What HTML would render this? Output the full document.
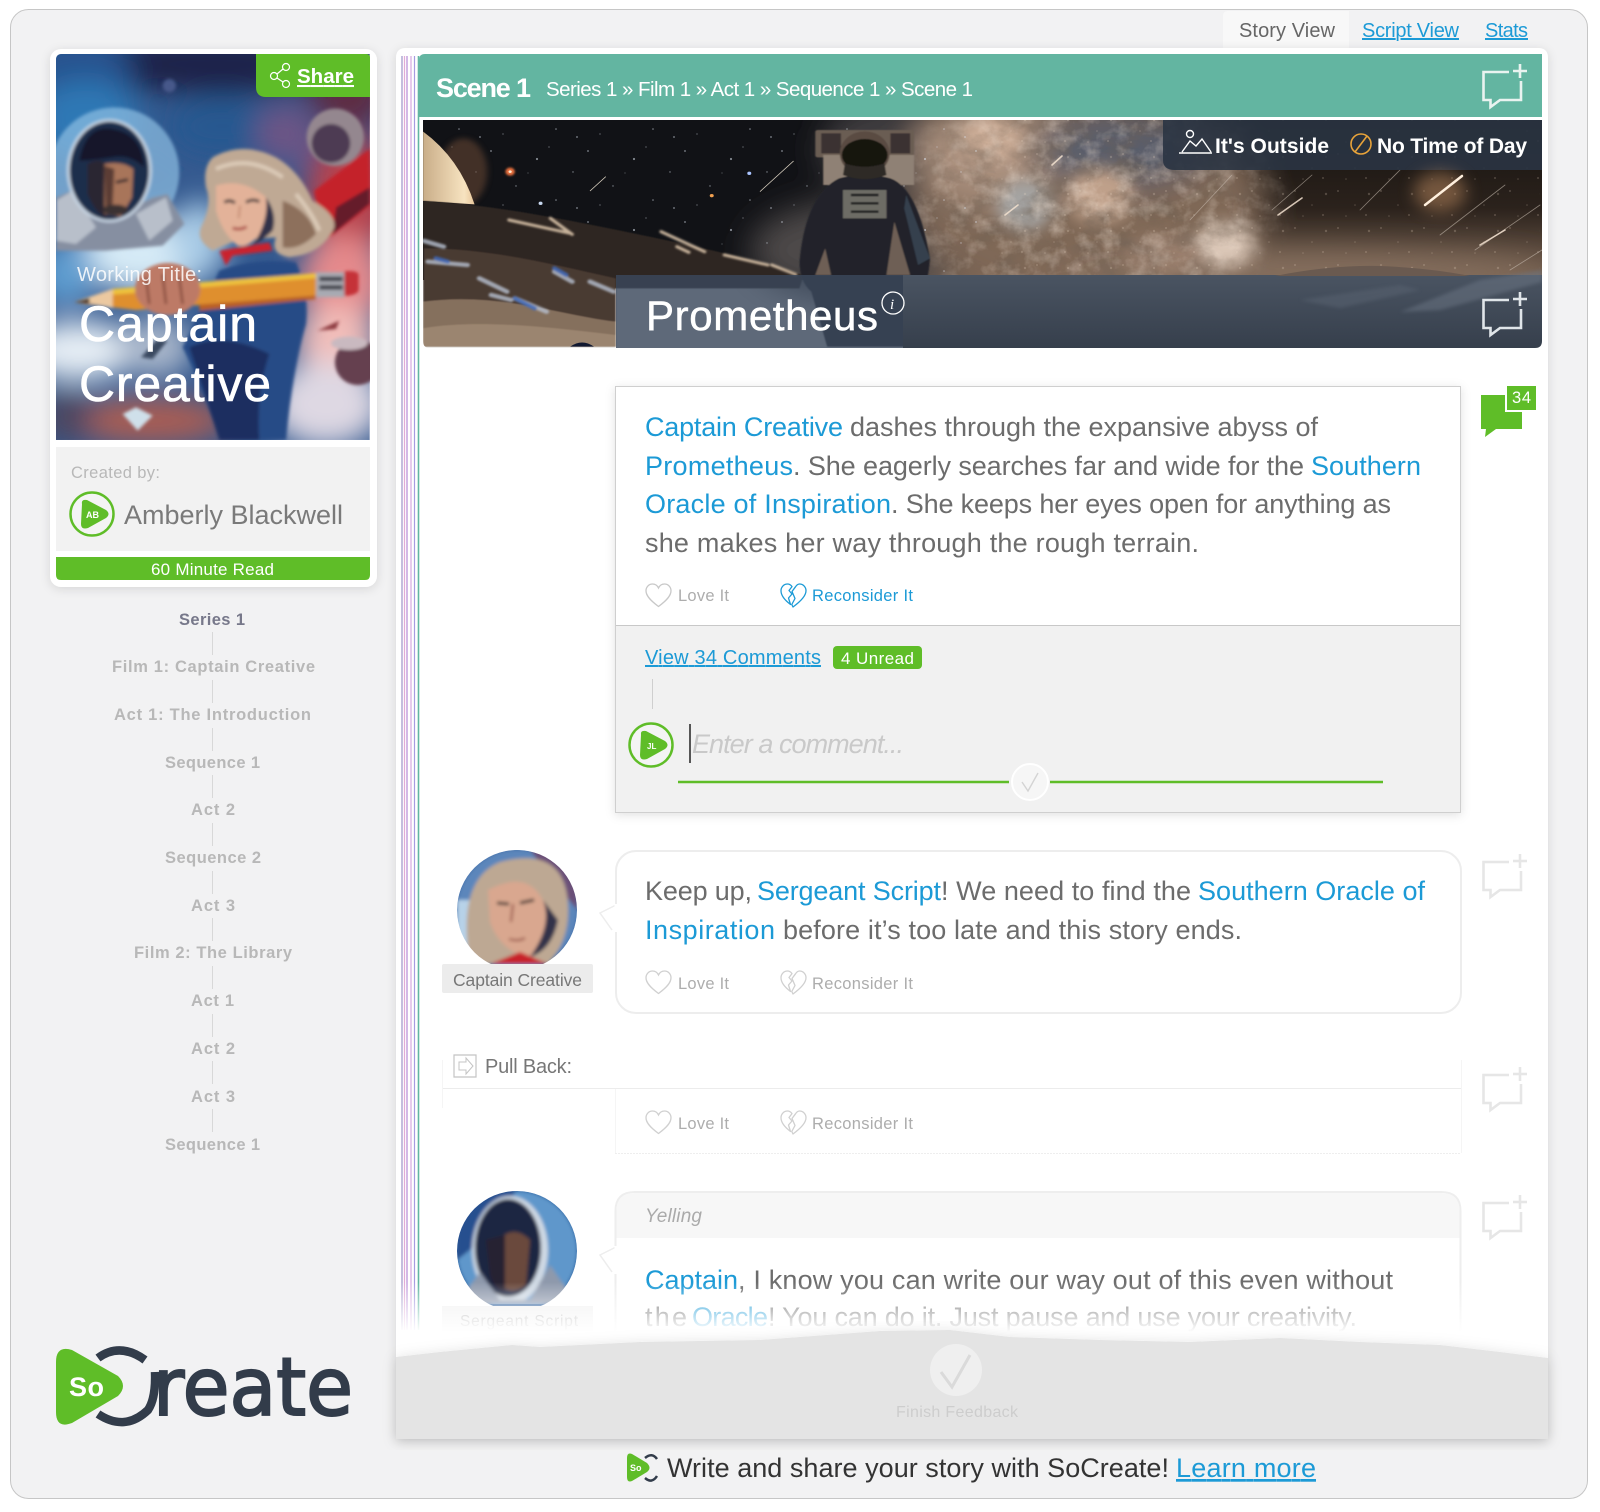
<!DOCTYPE html>
<html lang="en"><head><meta charset="utf-8"><title>Captain Creative - Story View</title>
<style>
html,body{margin:0;padding:0;background:#fff}
svg{display:block}
text{font-family:"Liberation Sans",sans-serif}
.b{font-size:27px;fill:#6c6c6c}
.l{font-size:27px;fill:#1c9ad6}
.act{font-size:16.5px;fill:#adadad}
.tr{font-size:16.5px;font-weight:700;fill:#b8b8b8;text-anchor:start}
.w{fill:#fff}
</style></head><body>
<svg width="1600" height="1512" viewBox="0 0 1600 1512" xmlns="http://www.w3.org/2000/svg">
<defs>
<filter id="b3" x="-30%" y="-30%" width="160%" height="160%"><feGaussianBlur stdDeviation="3"/></filter>
<filter id="b6" x="-30%" y="-30%" width="160%" height="160%"><feGaussianBlur stdDeviation="5"/></filter>
<filter id="b40" x="-60%" y="-60%" width="220%" height="220%"><feGaussianBlur stdDeviation="42"/></filter>
<filter id="b1" x="-20%" y="-20%" width="140%" height="140%"><feGaussianBlur stdDeviation="1"/></filter>
<filter id="b2" x="-20%" y="-20%" width="140%" height="140%"><feGaussianBlur stdDeviation="1.800"/></filter>
<filter id="b8" x="-40%" y="-40%" width="180%" height="180%"><feGaussianBlur stdDeviation="8"/></filter>
<filter id="b14" x="-50%" y="-50%" width="200%" height="200%"><feGaussianBlur stdDeviation="16"/></filter>
<filter id="sh" x="-5%" y="-5%" width="110%" height="110%"><feDropShadow dx="0" dy="2" stdDeviation="5" flood-color="#000" flood-opacity=".12"/></filter>
<filter id="sh2" x="-3%" y="-8%" width="106%" height="118%"><feDropShadow dx="0" dy="2" stdDeviation="7" flood-color="#000" flood-opacity=".13"/></filter>
<filter id="noise" x="0" y="0" width="100%" height="100%"><feTurbulence type="fractalNoise" baseFrequency=".035 .05" numOctaves="5" seed="7"/><feColorMatrix values="0 0 0 0 .16  0 0 0 0 .12  0 0 0 0 .09  1.9 0 0 0 -.72"/></filter>
<filter id="noise2" x="0" y="0" width="100%" height="100%"><feTurbulence type="fractalNoise" baseFrequency=".06" numOctaves="4" seed="3"/><feColorMatrix values="0 0 0 0 .94  0 0 0 0 .82  0 0 0 0 .72  0 2.2 0 0 -.95"/></filter>
<radialGradient id="mwg"><stop offset="0" stop-color="#fff"/><stop offset=".75" stop-color="#fff" stop-opacity=".7"/><stop offset="1" stop-color="#fff" stop-opacity="0"/></radialGradient>
<mask id="mw"><ellipse cx="1090" cy="200" rx="210" ry="130" fill="url(#mwg)"/></mask>
<clipPath id="cCover"><path d="M62 54H370V440H56V60Q56 54 62 54Z"/></clipPath>
<clipPath id="cBanner"><path d="M423 120H1542V341Q1542 348 1535 348H430Q423 348 423 341Z"/></clipPath>
<clipPath id="cA1"><path d="M457 850H577V964H457Z"/></clipPath>
<clipPath id="cA2"><path d="M457 1190H577V1304H457Z"/></clipPath>
<pattern id="stars" width="97" height="71" patternUnits="userSpaceOnUse">
<g fill="#dfe6f2"><circle cx="6" cy="9" r=".9"/><circle cx="31" cy="44" r=".7"/><circle cx="52" cy="17" r="1.100"/><circle cx="71" cy="58" r=".8"/><circle cx="88" cy="30" r=".7"/><circle cx="18" cy="63" r=".6"/><circle cx="43" cy="31" r=".5"/><circle cx="64" cy="5" r=".6"/><circle cx="92" cy="66" r=".9"/></g></pattern>
<pattern id="speck" width="43" height="37" patternUnits="userSpaceOnUse">
<g fill="#f0dcc8"><circle cx="5" cy="6" r="1"/><circle cx="22" cy="20" r=".8"/><circle cx="36" cy="9" r="1.200"/><circle cx="13" cy="31" r=".8"/><circle cx="33" cy="30" r="1"/></g></pattern>
<linearGradient id="fadeW" x1="0" y1="0" x2="0" y2="1"><stop offset="0" stop-color="#fff" stop-opacity="0"/><stop offset="1" stop-color="#fff"/></linearGradient>
<linearGradient id="gnd" x1="0" y1="0" x2="0" y2="1"><stop offset="0" stop-color="#4a5462"/><stop offset="1" stop-color="#363f4c"/></linearGradient>
<linearGradient id="sky" x1="0" y1="0" x2="0" y2="1"><stop offset="0" stop-color="#15120f"/><stop offset=".55" stop-color="#2b221c"/><stop offset="1" stop-color="#7a6453"/></linearGradient>
<linearGradient id="pl" x1="0" y1="0" x2="1" y2="0"><stop offset="0" stop-color="#c9ad88"/><stop offset=".8" stop-color="#f7e3c0"/><stop offset="1" stop-color="#e8c69a"/></linearGradient>
<symbol id="cm" viewBox="0 0 47 46" overflow="visible"><path d="M28 9H2.500V37H9.500V44L19 37H40V18M39 1V15M32 8H46" fill="none" stroke="currentColor" stroke-width="2.600"/></symbol>
<symbol id="ht" viewBox="0 0 27 25" overflow="visible"><path d="M13.500 23.500C4 16.500 1 12 1 7.800 1 3.800 4 1 7.500 1 10 1 12.300 2.400 13.500 5 14.700 2.400 17 1 19.500 1 23 1 26 3.800 26 7.800 26 12 23 16.500 13.500 23.500Z" fill="none" stroke="currentColor" stroke-width="1.300"/></symbol>
<symbol id="bh" viewBox="0 0 27 25" overflow="visible"><path d="M12 3.600C10.900 2 9.300 1 7.500 1 4 1 1 3.800 1 7.800 1 12 4.500 17 10.500 21.500L8.500 15 12 11 9 7.500ZM15.500 3.800C16.700 2 17.800 1 19.500 1 23 1 26 3.800 26 7.800 26 13 20.500 18.500 13 24L11.800 21.500 15 15.500 12 8.500Z" fill="none" stroke="currentColor" stroke-width="1.300" stroke-linejoin="round"/></symbol>
</defs>

<!-- frame -->
<rect x="10.500" y="9.500" width="1577" height="1489" rx="18" fill="#f2f2f3" stroke="#c6c6c6"/>

<!-- cover card -->
<rect x="50" y="49" width="327" height="538" rx="11" fill="#fff" filter="url(#sh)"/>
<g clip-path="url(#cCover)">
<g transform="translate(56 54) scale(.3333)">
<rect x="0" y="0" width="941" height="1158" fill="#34598f"/>
<g filter="url(#b40)">
<ellipse cx="480" cy="30" rx="420" ry="90" fill="#1c2049"/>
<ellipse cx="60" cy="60" rx="170" ry="110" fill="#27528f"/>
<ellipse cx="90" cy="200" rx="160" ry="120" fill="#2f78b5"/>
<ellipse cx="500" cy="220" rx="170" ry="90" fill="#285990"/>
<ellipse cx="880" cy="130" rx="120" ry="90" fill="#5f2a42"/>
<ellipse cx="690" cy="240" rx="90" ry="90" fill="#6d5585"/>
<ellipse cx="880" cy="430" rx="130" ry="190" fill="#b8434d"/>
<ellipse cx="860" cy="680" rx="130" ry="140" fill="#e58a8c"/>
<ellipse cx="840" cy="860" rx="120" ry="110" fill="#f1bdb9"/>
<ellipse cx="810" cy="1050" rx="170" ry="130" fill="#ded8e3"/>
<ellipse cx="270" cy="600" rx="210" ry="110" fill="#d5eaf6"/>
<ellipse cx="430" cy="560" rx="80" ry="120" fill="#a8cbe6"/>
<ellipse cx="30" cy="660" rx="90" ry="100" fill="#5f9dd0"/>
<ellipse cx="70" cy="890" rx="170" ry="90" fill="#e5edf4"/>
<ellipse cx="300" cy="880" rx="110" ry="90" fill="#a8b6ca"/>
<ellipse cx="280" cy="1100" rx="240" ry="70" fill="#aa5d52"/>
<ellipse cx="30" cy="1090" rx="80" ry="80" fill="#4d4660"/>
</g>
<g filter="url(#b6)">
<!-- helmet -->
<circle cx="175" cy="355" r="195" fill="#8dbfe2" opacity=".7"/>
<path d="M0 430L70 400 150 500 290 430 335 420 385 510 320 575 150 590 0 590Z" fill="#868fa1"/>
<path d="M0 440L50 410 120 520 60 570 0 560ZM240 480L330 430 350 500 280 560Z" fill="#b8bfca"/>
<ellipse cx="160" cy="350" rx="128" ry="155" fill="#c8d6e4"/>
<ellipse cx="160" cy="350" rx="119" ry="147" fill="#1f2d4c"/>
<path d="M70 320Q90 210 170 225 260 240 265 340 220 300 170 310 100 320 70 320Z" fill="#12172b"/>
<path d="M95 330Q130 310 150 330L150 490Q120 480 95 420Z" fill="#2b2530"/>
<path d="M145 330Q200 320 232 345L228 430 195 488 145 480Z" fill="#a8745a"/>
<path d="M145 335L175 345 170 450 150 478Z" fill="#5c3d34"/>
<path d="M180 385l36-8" stroke="#20202c" stroke-width="8" fill="none"/>
<ellipse cx="178" cy="468" rx="38" ry="16" fill="#3b3030"/>
<!-- planets -->
<circle cx="838" cy="250" r="86" fill="#94878f"/>
<circle cx="825" cy="268" r="58" fill="#4e3a52"/>
<circle cx="905" cy="925" r="68" fill="#653f4f"/>
<ellipse cx="880" cy="868" rx="55" ry="20" fill="#c9b9c0"/>
<circle cx="340" cy="95" r="20" fill="#46598a"/>
<!-- cape -->
<path d="M775 410L941 285V455L820 550 790 490Z" fill="#c4202c"/>
<path d="M840 460L941 400V450L830 540Z" fill="#651a2a"/>
<!-- woman suit -->
<path d="M490 650Q600 610 720 625 760 720 750 810 710 950 690 1158H490Q440 1000 380 880 430 780 490 650Z" fill="#274b86"/>
<path d="M400 880Q500 830 640 900 600 1020 610 1158H490Q440 1000 400 880Z" fill="#1f2d61"/>
<!-- hair -->
<path d="M470 310Q560 260 660 310 730 350 770 440 840 480 835 520 800 600 700 610 640 600 660 550L540 560 470 590Q420 560 435 520 470 450 450 400 440 340 470 310Z" fill="#bfa994"/>
<path d="M680 440Q760 470 780 540 730 590 680 580Z" fill="#8d6f5c"/>
<path d="M480 345Q580 300 680 370M720 420Q770 480 790 530" stroke="#dccbb8" stroke-width="12" fill="none"/>
<!-- face -->
<path d="M480 395Q560 370 630 430 650 480 620 530 580 585 545 575 500 540 480 470Z" fill="#e3b299"/>
<path d="M630 430Q665 480 650 530 620 560 590 575 640 500 630 430Z" fill="#33324a"/>
<path d="M505 445q15-10 32 2M570 445q20-12 40-2" stroke="#4a3d3e" stroke-width="9" fill="none"/>
<path d="M552 455l-4 38" stroke="#c68e76" stroke-width="6" fill="none"/>
<path d="M530 522q22 8 42-4" stroke="#ae4f48" stroke-width="9" fill="none"/>
<!-- scarf -->
<path d="M490 590L640 565 650 590 530 605 510 635Z" fill="#c9222d"/>
<!-- pencil -->
<path d="M55 745L170 705 780 660V725L240 768 170 760Z" fill="#df8f2e"/>
<path d="M170 705L780 658V672L170 722Z" fill="#eec33c"/>
<path d="M55 745L170 705 170 762 100 748Z" fill="#ecc9a0"/>
<path d="M55 745L100 733 100 748Z" fill="#1d1d26"/>
<path d="M430 752L780 725V735L430 770Z" fill="#b95f25"/>
<rect x="780" y="655" width="85" height="75" fill="#a9abb3"/>
<path d="M790 675h70M790 700h70" stroke="#3d3f48" stroke-width="14"/>
<path d="M865 652Q900 648 908 660V710Q900 725 865 726Z" fill="#c53038"/>
<!-- hand -->
<ellipse cx="335" cy="705" rx="98" ry="78" fill="#bd7a66"/>
<path d="M270 670l10 80M320 660l10 90M370 670l10 80" stroke="#84483b" stroke-width="7" fill="none"/>
<!-- debris -->
<path d="M255 910L300 860 335 860 290 915Z" fill="#3b4a60"/>
<path d="M785 830L850 800 840 825Z" fill="#8d3a40"/>
<path d="M200 1080L240 1060 290 1085 245 1130Z" fill="#cfe0ea"/>
</g>
</g>
</g>
<path d="M256 54H366Q370 54 370 58V97H266Q256 97 256 87Z" fill="#5fbd28"/>
<g fill="none" stroke="#fff" stroke-width="1.200"><circle cx="286" cy="67" r="3.500"/><circle cx="274" cy="76" r="3.500"/><circle cx="286" cy="84" r="3.500"/><path d="M283 69l-6 5M277 78l6 4"/></g>
<text x="297" y="83" font-size="20.500" font-weight="700" class="w" text-decoration="underline" textLength="57">Share</text>
<text x="77" y="281" font-size="20" class="w" opacity=".85" textLength="125">Working Title:</text>
<text x="79" y="341" font-size="50" class="w" stroke="#fff" stroke-width=".6" textLength="178">Captain</text>
<text x="79" y="401" font-size="50" class="w" stroke="#fff" stroke-width=".6" textLength="192">Creative</text>
<rect x="56" y="447" width="314" height="104" fill="#f2f2f2"/>
<text x="71" y="478" font-size="16.500" fill="#b8b8b8" textLength="89">Created by:</text>
<circle cx="92" cy="514" r="21.500" fill="#f4f4f4" stroke="#5fbd28" stroke-width="2.500"/>
<path d="M82 504Q81 499 87 500L106 510Q111 514 106 518L88 528Q81 530 81 524Z" fill="#5fbd28"/>
<text x="86" y="518" font-size="9" font-weight="700" class="w">AB</text>
<text x="124" y="524" font-size="27" fill="#7a7a7a" textLength="219">Amberly Blackwell</text>
<path d="M56 557H370V575Q370 580 365 580H61Q56 580 56 575Z" fill="#5fbd28"/>
<text x="151" y="575" font-size="17" class="w" textLength="123">60 Minute Read</text>

<!-- tree -->
<g stroke="#d8d8d8" stroke-width="1">
<path d="M212.500 632V655M212.500 680V703M212.500 728V751M212.500 775V798M212.500 823V846M212.500 871V894M212.500 918V941M212.500 966V989M212.500 1014V1037M212.500 1061V1084M212.500 1109V1132"/>
</g>
<text class="tr" x="179" y="625" style="fill:#77788a" textLength="66">Series 1</text>
<text class="tr" x="112" y="672" textLength="203">Film 1: Captain Creative</text>
<text class="tr" x="114" y="720" textLength="197">Act 1: The Introduction</text>
<text class="tr" x="165" y="768" textLength="95">Sequence 1</text>
<text class="tr" x="191" y="815" textLength="44">Act 2</text>
<text class="tr" x="165" y="863" textLength="96">Sequence 2</text>
<text class="tr" x="191" y="911" textLength="44">Act 3</text>
<text class="tr" x="134" y="958" textLength="158">Film 2: The Library</text>
<text class="tr" x="191" y="1006" textLength="43">Act 1</text>
<text class="tr" x="191" y="1054" textLength="44">Act 2</text>
<text class="tr" x="191" y="1102" textLength="44">Act 3</text>
<text class="tr" x="165" y="1150" textLength="95">Sequence 1</text>

<!-- logo -->
<path d="M56 1362Q56 1345 72 1350L118 1376Q128 1386 118 1396L72 1423Q56 1429 56 1412Z" fill="#5fbd28"/>
<text x="69" y="1396" font-size="27" font-weight="700" class="w" textLength="35">So</text>
<path d="M98 1358Q120 1342 145 1360M98 1414Q125 1432 148 1410 156 1398 155 1372" fill="none" stroke="#323c4a" stroke-width="8.500"/>
<text x="153" y="1415" font-size="80" fill="#323c4a" stroke="#323c4a" stroke-width="2" textLength="200" lengthAdjust="spacingAndGlyphs" style="font-family:'DejaVu Sans',sans-serif">reate</text>

<!-- tabs -->
<path d="M1223 48V16Q1223 11 1228 11H1349V48Z" fill="#f8f8f8"/>
<text x="1239" y="37" font-size="20" fill="#666" textLength="96">Story View</text>
<text x="1362" y="37" font-size="20" fill="#1c9ad6" text-decoration="underline" textLength="97">Script View</text>
<text x="1485" y="37" font-size="20" fill="#1c9ad6" text-decoration="underline" textLength="43">Stats</text>

<!-- main panel -->
<path d="M406 48H1538Q1548 48 1548 58V1439H396V58Q396 48 406 48Z" fill="#fff" filter="url(#sh)"/>
<g stroke-width="1.200">
<path d="M402 56V1330" stroke="#9d93c8"/><path d="M404.500 56V1330" stroke="#e3acd6"/><path d="M407 56V1330" stroke="#b68ad6"/><path d="M411 56V1330" stroke="#d6a8e0"/><path d="M414.500 56V1330" stroke="#a79be0"/><path d="M418.500 56V1330" stroke="#62b6a2" stroke-width="1.600"/>
</g>

<!-- scene header -->
<path d="M425 54H1542V117H419V60Q419 54 425 54Z" fill="#63b5a1"/>
<text x="436" y="97" font-size="27" font-weight="700" class="w" textLength="95">Scene 1</text>
<text x="546" y="96" font-size="20.500" class="w" textLength="427">Series 1 » Film 1 » Act 1 » Sequence 1 » Scene 1</text>
<use href="#cm" x="1481" y="63" width="47" height="46" style="color:#e9f3f0"/>

<!-- banner -->
<g clip-path="url(#cBanner)">
<rect x="423" y="120" width="1119" height="160" fill="url(#sky)"/>
<rect x="423" y="120" width="500" height="160" fill="#111216"/>
<g filter="url(#b14)">
<ellipse cx="860" cy="250" rx="110" ry="50" fill="#4d4a48"/>
<ellipse cx="890" cy="150" rx="70" ry="50" fill="#3f3d3f"/>
<ellipse cx="1090" cy="205" rx="175" ry="110" fill="#7f6857"/>
<ellipse cx="990" cy="150" rx="75" ry="55" fill="#a88e7c"/>
<ellipse cx="1120" cy="150" rx="85" ry="36" fill="#585d6a"/>
<ellipse cx="1300" cy="272" rx="250" ry="20" fill="#86705f"/>
</g>
<g filter="url(#b8)">
<ellipse cx="1100" cy="195" rx="34" ry="28" fill="#bfa08a"/>
<ellipse cx="1225" cy="245" rx="30" ry="22" fill="#dcc8b8"/>
<ellipse cx="1025" cy="205" rx="28" ry="26" fill="#a5a4a3"/>
<ellipse cx="1165" cy="255" rx="40" ry="20" fill="#9a7f6d"/>
<ellipse cx="990" cy="140" rx="30" ry="22" fill="#cdae98"/>
</g>
<rect x="880" y="120" width="420" height="160" filter="url(#noise)" mask="url(#mw)" opacity=".75"/>
<rect x="880" y="120" width="420" height="160" filter="url(#noise2)" mask="url(#mw)" opacity=".45"/>
<rect x="423" y="120" width="560" height="160" fill="url(#stars)" opacity=".55"/>
<rect x="1000" y="120" width="540" height="155" fill="url(#speck)" opacity=".22"/>
<g transform="translate(420 115) scale(.3953 .3333)">
<ellipse cx="110" cy="170" rx="60" ry="100" fill="#6b4a34" opacity=".55" filter="url(#b8)"/>
<path d="M8 50Q100 130 138 268L8 258Z" fill="url(#pl)"/>
<circle cx="228" cy="170" r="12" fill="#e8703c" filter="url(#b3)"/>
<circle cx="228" cy="170" r="4" fill="#ffe9d0"/>
<circle cx="833" cy="175" r="5" fill="#aac4ff"/><circle cx="738" cy="242" r="5" fill="#f0a050"/><circle cx="305" cy="265" r="5" fill="#c8d8f0"/>
<path d="M860 230L945 138M430 228L470 185" stroke="#d9d0c0" stroke-width="2"/>
<g filter="url(#b2)">
<path d="M8 258C200 270 400 320 640 380 800 420 950 470 970 482L960 520 495 520V695H8Z" fill="#2f2724"/>
<path d="M10 400C180 400 340 450 495 490V695H8Z" fill="#4a3a32"/>
<path d="M8 560C200 530 350 600 495 620V695H8Z" fill="#85705d"/>
<path d="M8 640C150 610 350 640 495 660V695H8Z" fill="#9b8570"/>
</g>
<g fill="none" stroke-linecap="round" filter="url(#b3)">
<path d="M225 315L380 355M330 310L385 358M610 350L720 410M650 395L680 412M770 420L880 450M890 450L950 478" stroke="#e0c9ae" stroke-width="9" opacity=".85"/>
<path d="M10 378L60 395M20 440L120 450M150 490L220 530M340 470L385 500M430 500L490 530M180 540L230 555M240 550L320 590" stroke="#b6bfcf" stroke-width="13" opacity=".8"/>
<path d="M40 430L70 440M340 460L370 480M240 550L290 580" stroke="#4069b8" stroke-width="12" opacity=".85"/>
</g>
<path d="M380 695Q410 670 440 695Z" fill="#101830"/>
<!-- astronaut -->
<g filter="url(#b2)">
<rect x="1000" y="45" width="250" height="82" rx="6" fill="#6b5d53"/>
<rect x="1015" y="55" width="50" height="60" fill="#3a3330"/><rect x="1190" y="55" width="50" height="60" fill="#3a3330"/>
<rect x="1020" y="120" width="230" height="90" fill="#8f8174"/>
<path d="M960 440Q975 240 1060 190 1125 170 1190 190 1260 220 1290 430 1285 530 1255 530L1240 695H1030L990 530Q960 500 960 440Z" fill="#212429"/>
<path d="M1070 225H1180V310H1070Z" fill="#6d6c65"/>
<path d="M1090 240h70M1090 265h70M1090 290h70" stroke="#2a2b2c" stroke-width="8"/>
<path d="M1025 400L1040 480H1000ZM1200 320L1240 480H1180Z" fill="#6e5f54"/>
<path d="M1230 240L1290 430 1260 450 1225 280Z" fill="#36414d"/>
<ellipse cx="1125" cy="115" rx="63" ry="66" fill="#5a4c43"/>
<ellipse cx="1125" cy="120" rx="58" ry="48" fill="#17120f"/>
<path d="M1075 145Q1125 165 1175 145L1180 180Q1125 205 1070 180Z" fill="#2e2926"/>
</g>
</g>
<path d="M903 275H1542V348H903Z" fill="url(#gnd)"/>
<path d="M1275 276Q1330 265 1380 266 1430 268 1470 276Z" fill="#6a5a50"/>
<path d="M1400 312L1480 280 1542 270V282L1440 310Z" fill="#6c7684" opacity=".5" filter="url(#b2)"/>
<path d="M1300 300L1400 285 1420 290 1340 308Z" fill="#56606e" opacity=".6" filter="url(#b2)"/>
<path d="M616 275H903V348H616Z" fill="#3b485b" opacity=".82"/>
<g fill="none" stroke-linecap="round">
<path d="M1190 220L1232 175M1272 210L1312 175M1360 210L1400 170M1440 235L1505 185M1475 250L1540 205M1510 270L1542 250" stroke="#c8bcb0" stroke-width=".8" opacity=".6"/>
<path d="M1278 215L1302 198M1480 245L1505 230M1005 215L1018 205M1052 165L1062 156" stroke="#f3e2d0" stroke-width="1.600" opacity=".85"/>
</g>
<path d="M1163 120H1542V170H1175Q1163 170 1163 160Z" fill="#2a3443" opacity=".9"/>
<ellipse cx="1440" cy="192" rx="26" ry="20" fill="#a87c56" opacity=".6" filter="url(#b8)"/>
<path d="M1425 205L1462 176" stroke="#fff0de" stroke-width="2.500" stroke-linecap="round"/>
</g>
<!-- tags -->
<g fill="none" stroke="#fff" stroke-width="1.400"><path d="M1179 153H1212M1182 152L1190 141 1196 146 1202 139 1211 152"/><circle cx="1190" cy="134" r="3.500"/></g>
<text x="1215" y="153" font-size="21" font-weight="700" class="w" textLength="114">It's Outside</text>
<circle cx="1361" cy="144" r="10" fill="none" stroke="#e8a33a" stroke-width="1.600"/><path d="M1355 152L1367 136" stroke="#e8a33a" stroke-width="1.600"/>
<text x="1377" y="153" font-size="21" font-weight="700" class="w" textLength="150">No Time of Day</text>
<text x="646" y="330" font-size="42" class="w" stroke="#fff" stroke-width=".5" textLength="232">Prometheus</text>
<circle cx="893" cy="303" r="11" fill="none" stroke="#fff" stroke-width="1.300"/>
<text x="890" y="309" font-size="15" font-style="italic" style="font-family:'Liberation Serif',serif" class="w">i</text>
<use href="#cm" x="1481" y="291" width="47" height="46" style="color:#e0e5e9"/>

<!-- green count bubble -->
<path d="M1481 395H1522V429H1496L1485 437 1486 429H1481Z" fill="#5fbd28"/>
<rect x="1506" y="385" width="31" height="26" fill="#5fbd28" stroke="#fff" stroke-width="2"/>
<text x="1512" y="403" font-size="16.500" class="w" textLength="19">34</text>

<!-- card 1 -->
<rect x="615.500" y="386.500" width="845" height="426" fill="#fff" stroke="#cfcfcf" filter="url(#sh)"/>
<rect x="616" y="625" width="844" height="187" fill="#f1f1f1"/>
<path d="M616 625.500H1460" stroke="#c8c8c8"/>
<text x="645" y="436" class="l" textLength="198">Captain Creative</text>
<text x="850" y="436" class="b" textLength="468">dashes through the expansive abyss of</text>
<text x="645" y="475" class="l" textLength="148">Prometheus</text>
<text x="793" y="475" class="b" textLength="511">. She eagerly searches far and wide for the</text>
<text x="1311" y="475" class="l" textLength="110">Southern</text>
<text x="645" y="513" class="l" textLength="246">Oracle of Inspiration</text>
<text x="891" y="513" class="b" textLength="500">. She keeps her eyes open for anything as</text>
<text x="645" y="552" class="b" textLength="554">she makes her way through the rough terrain.</text>
<use href="#ht" x="645" y="583" width="27" height="25" style="color:#c8c8c8"/>
<text x="678" y="601" class="act" textLength="51">Love It</text>
<use href="#bh" x="780" y="583" width="27" height="25" style="color:#1c9ad6"/>
<text x="812" y="601" class="act" style="fill:#1c9ad6" textLength="101">Reconsider It</text>
<text x="645" y="664" font-size="20" fill="#1c9ad6" text-decoration="underline" textLength="176">View 34 Comments</text>
<rect x="833" y="646" width="89" height="23" rx="4" fill="#5fbd28"/>
<text x="841" y="664" font-size="17" class="w" textLength="73">4 Unread</text>
<path d="M652.500 679V709" stroke="#cfcfcf"/>
<circle cx="651" cy="745" r="21.500" fill="#f4f4f4" stroke="#5fbd28" stroke-width="2.500"/>
<path d="M641 735Q640 730 646 731L665 741Q670 745 665 749L647 759Q640 761 640 755Z" fill="#5fbd28"/>
<text x="647" y="749" font-size="8" font-weight="700" class="w">JL</text>
<path d="M690 724V763" stroke="#222" stroke-width="1.500"/>
<text x="692" y="753" font-size="27" font-style="italic" fill="#c9c9c9" textLength="212">Enter a comment...</text>
<path d="M678 782H1009M1050 782H1383" stroke="#5fbd28" stroke-width="2.500"/>
<circle cx="1030" cy="782" r="18" fill="#f6f6f6" stroke="#fff" stroke-width="2"/>
<path d="M1022 782l6 9 10-18" fill="none" stroke="#d4d4d4" stroke-width="1.400"/>

<!-- card 2 -->
<use href="#cm" x="1481" y="853" width="47" height="46" style="color:#e6e6e6"/>
<circle cx="517" cy="910" r="60" fill="#456fa8"/>
<g clip-path="url(#cA1)"><g filter="url(#b2)">
<circle cx="517" cy="910" r="60" fill="#5b86bb"/>
<path d="M530 850H577V910Z" fill="#6b4f78"/>
<path d="M457 900H490V964H457Z" fill="#b7d2e8"/>
<path d="M470 964Q456 880 500 862 565 845 568 905 570 940 548 964Z" fill="#bda893"/>
<path d="M488 890Q530 868 545 905 550 940 528 958 500 950 490 922Z" fill="#d9a78f"/>
<path d="M543 900Q553 925 530 957 552 950 558 920Z" fill="#33324a"/>
<path d="M497 903l12 1M520 903l14-3" stroke="#4a3a36" stroke-width="3" fill="none"/>
<path d="M513 904l-2 18M509 939q9 3 16-1" stroke="#9c5a4d" stroke-width="2.200" fill="none"/>
<path d="M490 964L520 952 548 964Z" fill="#c8202c"/>
</g>
<path d="M457 850H577V964H457Z M577 910A60 60 0 1 0 457 910A60 60 0 1 0 577 910Z" fill="#fff" fill-rule="evenodd"/>
</g>
<rect x="442" y="964" width="151" height="29" rx="2" fill="#ececec"/>
<text x="453" y="986" font-size="17.500" fill="#777" textLength="129">Captain Creative</text>
<rect x="616" y="851" width="845" height="162" rx="20" fill="#fff" stroke="#ededed" stroke-width="2"/>
<path d="M616 905L600 913 612 930" fill="#fff" stroke="#ededed" stroke-width="1.500"/>
<path d="M616 904V932" stroke="#fff" stroke-width="3"/>
<text x="645" y="900" class="b" textLength="107">Keep up,</text>
<text x="757" y="900" class="l" textLength="184">Sergeant Script</text>
<text x="941" y="900" class="b" textLength="250">! We need to find the</text>
<text x="1198" y="900" class="l" textLength="227">Southern Oracle of</text>
<text x="645" y="939" class="l" textLength="130">Inspiration</text>
<text x="783" y="939" class="b" textLength="459">before it’s too late and this story ends.</text>
<use href="#ht" x="645" y="970" width="27" height="25" style="color:#d0d0d0"/>
<text x="678" y="989" class="act" textLength="51">Love It</text>
<use href="#bh" x="780" y="970" width="27" height="25" style="color:#d0d0d0"/>
<text x="812" y="989" class="act" textLength="101">Reconsider It</text>

<!-- pull back -->
<path d="M454 1055H476V1077H454Z" fill="none" stroke="#c4c4c4" stroke-width="1.200"/>
<path d="M459 1062H466V1058L473 1066 466 1074V1070H459Z" fill="none" stroke="#c4c4c4"/>
<text x="485" y="1073" font-size="20" fill="#777" textLength="87">Pull Back:</text>
<path d="M442 1088.500H1461" stroke="#ececec"/>
<path d="M442.500 1060V1108M615.500 1089V1153M1461.500 1060V1153" stroke="#f5f5f5"/>
<path d="M615 1153.500H1461" stroke="#eeeeee" stroke-dasharray="2 1"/>
<use href="#cm" x="1481" y="1066" width="47" height="46" style="color:#e6e6e6"/>
<use href="#ht" x="645" y="1110" width="27" height="25" style="color:#d0d0d0"/>
<text x="678" y="1129" class="act" textLength="51">Love It</text>
<use href="#bh" x="780" y="1110" width="27" height="25" style="color:#d0d0d0"/>
<text x="812" y="1129" class="act" textLength="101">Reconsider It</text>

<!-- card 4 -->
<use href="#cm" x="1481" y="1194" width="47" height="46" style="color:#e6e6e6"/>
<circle cx="517" cy="1251" r="60" fill="#2d5f9c"/>
<g clip-path="url(#cA2)"><g filter="url(#b2)">
<circle cx="517" cy="1251" r="60" fill="#5e97cb"/>
<path d="M457 1190H517L470 1250 457 1260Z" fill="#27508f"/>
<ellipse cx="510" cy="1250" rx="38" ry="54" fill="#cfd9e4"/>
<ellipse cx="508" cy="1248" rx="33" ry="49" fill="#1b2542"/>
<path d="M500 1238Q515 1225 530 1240L526 1285Q512 1296 500 1285Z" fill="#6a4a3e"/>
<path d="M486 1240L505 1235V1292Q494 1290 490 1275Z" fill="#282430"/>
<path d="M457 1304L480 1272 500 1300H530L550 1265 577 1304Z" fill="#8e99ac"/>
</g>
<path d="M457 1190H577V1304H457Z M577 1251A60 60 0 1 0 457 1251A60 60 0 1 0 577 1251Z" fill="#fff" fill-rule="evenodd"/>
</g>
<rect x="442" y="1306" width="151" height="28" fill="#f0f0f0"/>
<text x="460" y="1326" font-size="15.500" fill="#aaa" textLength="118">Sergeant Script</text>
<path d="M615.500 1400V1211Q615.500 1192 635 1192H1441Q1460.500 1192 1460.500 1211V1400" fill="#fff" stroke="#eeeeee" stroke-width="2"/>
<path d="M616.500 1238V1211Q616.500 1193 635 1193H1441Q1459.500 1193 1459.500 1211V1238Z" fill="#f7f7f7"/>
<path d="M616 1247L600 1255 612 1272" fill="#fff" stroke="#ededed" stroke-width="1.500"/>
<path d="M616 1246V1274" stroke="#fff" stroke-width="3"/>
<text x="645" y="1222" font-size="19" font-style="italic" fill="#aaa" textLength="57">Yelling</text>
<text x="645" y="1289" class="l" textLength="93">Captain</text>
<text x="738" y="1289" class="b" textLength="655">, I know you can write our way out of this even without</text>
<text x="645" y="1326" class="b" textLength="42">the</text>
<text x="692" y="1326" class="l" textLength="76">Oracle</text>
<text x="768" y="1326" class="b" textLength="589">! You can do it. Just pause and use your creativity.</text>
<rect x="397" y="1282" width="1150" height="50" fill="url(#fadeW)"/>
<rect x="397" y="1332" width="1150" height="30" fill="#fff"/>

<!-- bottom torn panel -->
<path d="M396 1357L440 1352 512 1345 540 1347 640 1342 760 1340 880 1331 950 1330 1010 1337 1100 1340 1190 1342 1280 1338 1360 1342 1440 1345 1500 1352 1548 1358V1439H396Z" fill="#e4e4e4" filter="url(#sh2)"/>
<circle cx="956" cy="1370" r="26" fill="#efefef"/>
<path d="M941 1372l11 15 18-32" fill="none" stroke="#dadada" stroke-width="3"/>
<text x="896" y="1417" font-size="16" fill="#cdcdcd" textLength="122">Finish Feedback</text>

<!-- footer -->
<path d="M627 1458Q627 1452 632 1454L647 1463Q652 1468 647 1472L632 1481Q627 1483 627 1477Z" fill="#5fbd28"/>
<text x="630" y="1471" font-size="9" font-weight="700" class="w">So</text>
<path d="M645 1458Q652 1452 657 1459M645 1478Q652 1484 657 1476" fill="none" stroke="#323c4a" stroke-width="2.500"/>
<text x="667" y="1477" font-size="27" fill="#333" textLength="502">Write and share your story with SoCreate!</text>
<text x="1176" y="1477" font-size="27" fill="#1c9ad6" text-decoration="underline" textLength="140">Learn more</text>
</svg>
</body></html>
